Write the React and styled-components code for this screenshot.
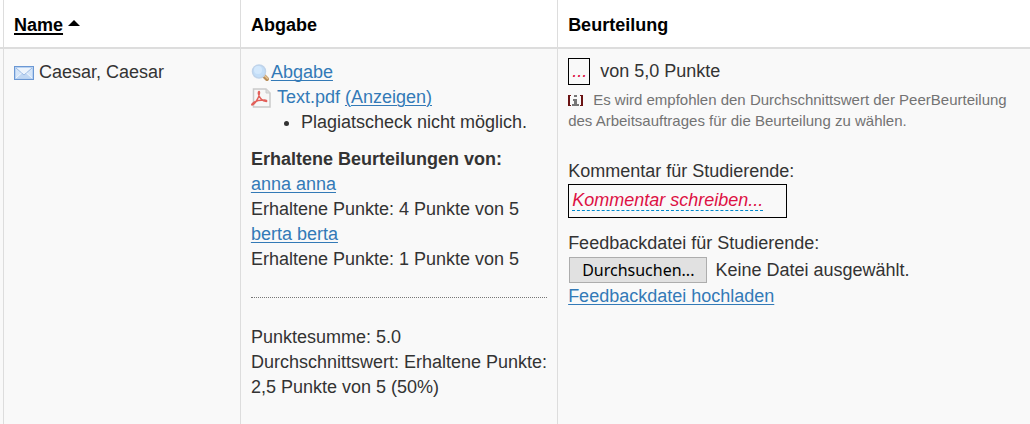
import React, { useRef } from "react";
import styled, { createGlobalStyle } from "styled-components";

const GlobalStyle = createGlobalStyle`
  * {
    box-sizing: border-box;
  }

  body {
    margin: 0;
    background: #fff;
    color: #333;
    font-family: "Liberation Sans", Arial, sans-serif;
    font-size: 18px;
    line-height: 25px;
  }
`;

const Table = styled.table`
  width: 100%;
  height: 100vh;
  table-layout: fixed;
  border-collapse: separate;
  border-spacing: 0;
`;

const Col = styled.col`
  width: ${(props) => props.$width};
`;

const HeadCell = styled.th`
  height: 49px;
  padding: 4px 10px 0;
  border-left: 1px solid #ddd;
  border-bottom: 2px solid #ddd;
  color: #000;
  text-align: left;
  vertical-align: middle;
`;

const Cell = styled.td`
  padding: 11px 10px 24px;
  border-left: 1px solid #ddd;
  background: #f9f9f9;
  vertical-align: top;
`;

const EdgeHead = styled.td`
  padding: 0;
  border-bottom: 2px solid #ddd;
`;

const EdgeCell = styled.td`
  padding: 0;
  background: #f9f9f9;
`;

const Link = styled.a`
  color: #337ab7;
  text-decoration: ${(props) => (props.$plain ? "none" : "underline")};
  text-decoration-thickness: 1px;
  text-underline-offset: 2px;
  text-decoration-skip-ink: ${(props) => (props.$skip ? "auto" : "none")};
`;

const SortLink = styled.a`
  color: #000;
  text-decoration: underline;
  text-decoration-thickness: 2px;
  text-underline-offset: 2px;
`;

const SortArrow = styled.svg`
  width: 12px;
  height: 6px;
  margin-left: 5px;
  vertical-align: 5px;
`;

const Line = styled.div`
  display: flex;
  align-items: center;
  gap: ${(props) => props.$gap || "0"};
`;

const Icon = styled.svg`
  flex: none;
`;

const Checks = styled.ul`
  margin: 0 0 12px;
  padding-left: 50px;
`;

const Review = styled.div``;

const Divider = styled.hr`
  margin: 25px 0 27px;
  border: 0;
  border-top: 1px dotted #777;
`;

const Points = styled.div`
  display: flex;
  align-items: center;
  gap: 10px;
  height: 27px;
  margin-top: -2px;
`;

const EditBox = styled.div`
  display: ${(props) => (props.$small ? "inline-flex" : "flex")};
  width: ${(props) => (props.$small ? "22px" : "219px")};
  height: ${(props) => (props.$small ? "27px" : "34px")};
  align-items: center;
  padding: 0 3px 2px;
  border: 1px solid #000;
`;

const EditButton = styled.button`
  padding: 0;
  border: 0;
  border-bottom: ${(props) => (props.$dashed ? "1px dashed #08c" : "0")};
  background: none;
  color: #dd1144;
  font: italic 18px/20px "Liberation Sans", Arial, sans-serif;
  cursor: pointer;
`;

const Hint = styled.p`
  margin: 4px 0 28px;
  color: #737373;
  font-size: 15px;
  line-height: 21px;
`;

const HintIcon = styled.svg`
  margin-right: 10px;
  vertical-align: -2px;
`;

const Label = styled.label`
  display: block;
`;

const Field = styled.div`
  margin-bottom: 13px;
`;

const FileRow = styled.div`
  display: flex;
  align-items: center;
  gap: 8px;
  margin: 1px 0;
  padding-left: 1px;
`;

const FileInput = styled.input`
  display: none;
`;

const FileButton = styled.button`
  height: 26px;
  padding: 0 12px;
  border: 1px solid #adadad;
  background: #e1e1e1;
  color: #000;
  font: 16px/22px "Noto Sans", "Open Sans", sans-serif;
`;

const MailIcon = () => (
  <Icon width="20" height="14" viewBox="0 0 20 14" aria-hidden="true">
    <rect x="0.5" y="0.5" width="19" height="13" fill="#d5e5f8" stroke="#6b98d4" />
    <rect x="1.5" y="1.5" width="17" height="11" fill="none" stroke="#b9d2f1" />
    <path d="M2 12 L8 7 H12 L18 12 Z" fill="#c0d7f3" />
    <path d="M2 2 H18 L10 9 Z" fill="#edf4fc" />
    <path d="M2 2 L10 9 L18 2" fill="none" stroke="#9dbbe4" />
    <path d="M2 12 L7.5 7 M18 12 L12.5 7" fill="none" stroke="#f0f6fd" />
  </Icon>
);

const SearchIcon = () => (
  <Icon width="20" height="18" viewBox="0 0 20 18" aria-hidden="true">
    <path d="M12.5 11.5 L16 15" stroke="#b98d58" strokeWidth="4" strokeLinecap="round" />
    <path d="M12.5 10.5 L16.5 14.5" stroke="#e6c594" strokeWidth="1.5" strokeLinecap="round" />
    <circle cx="8" cy="7.5" r="6.5" fill="#c3def8" stroke="#bfd3ea" strokeWidth="1.5" />
    <circle cx="7" cy="6" r="4" fill="#d3e8fc" />
  </Icon>
);

const PdfIcon = () => (
  <Icon width="20" height="20" viewBox="0 0 20 20" aria-hidden="true">
    <path d="M2.5 1 H15 L19 5 V19 H2.5 Z" fill="#f7f7f7" stroke="#cacaca" strokeWidth="1.5" />
    <path d="M15 1 V5 H19" fill="#ddd" stroke="#cacaca" />
    <path
      d="M1 17 C4 16 8 10 8.5 5 C8.500 2.500 7 3.500 7.500 6 C8.500 10 11 13 15.500 13.500 C16 12.500 15 12 13.500 12 C9 12 4 13 1.500 15.500 C0.800 16.200 0.500 17 1 17 Z"
      fill="none"
      stroke="#e2605a"
      strokeWidth="1.5"
      strokeLinejoin="round"
    />
  </Icon>
);

const InfoIcon = () => (
  <HintIcon width="15" height="12" viewBox="0 0 15 12" aria-hidden="true">
    <path d="M0 0 H3 V1 H2 V10 H3 V11 H0 Z M15 0 H12 V1 H13 V10 H12 V11 H15 Z" fill="#6b1414" />
    <path d="M6 0 H9 V2 H6 Z M5 4 H9 V9 H11 V11 H4 V9 H6 V6 H5 Z" fill="#777" />
  </HintIcon>
);

const reviews = [
  { name: "anna anna", points: "Erhaltene Punkte: 4 Punkte von 5" },
  { name: "berta berta", points: "Erhaltene Punkte: 1 Punkte von 5" },
];

const Submission = () => (
  <>
    <Line>
      <SearchIcon />
      <Link href="#abgabe">Abgabe</Link>
    </Line>
    <Line $gap="6px">
      <PdfIcon />
      <span>
        <Link $plain href="#text">Text.pdf</Link>{" "}
        <Link $skip href="#anzeigen">(Anzeigen)</Link>
      </span>
    </Line>
    <Checks>
      <li>Plagiatscheck nicht möglich.</li>
    </Checks>
    <strong>Erhaltene Beurteilungen von:</strong>
    {reviews.map((review) => (
      <Review key={review.name}>
        <Link href="#beurteilung">{review.name}</Link>
        <div>{review.points}</div>
      </Review>
    ))}
    <Divider />
    <div>Punktesumme: 5.0</div>
    <div>Durchschnittswert: Erhaltene Punkte: 2,5 Punkte von 5 (50%)</div>
  </>
);

const Grading = () => {
  const fileRef = useRef(null);

  return (
    <>
      <Points>
        <EditBox $small>
          <EditButton type="button" aria-label="Punkte">...</EditButton>
        </EditBox>
        <span>von 5,0 Punkte</span>
      </Points>
      <Hint>
        <InfoIcon />
        Es wird empfohlen den Durchschnittswert der PeerBeurteilung des
        Arbeitsauftrages für die Beurteilung zu wählen.
      </Hint>
      <Field>
        <Label htmlFor="kommentar">Kommentar für Studierende:</Label>
        <EditBox>
          <EditButton $dashed type="button" id="kommentar">
            Kommentar schreiben...
          </EditButton>
        </EditBox>
      </Field>
      <Label htmlFor="feedbackdatei">Feedbackdatei für Studierende:</Label>
      <FileRow>
        <FileInput type="file" id="feedbackdatei" ref={fileRef} />
        <FileButton type="button" onClick={() => fileRef.current.click()}>
          Durchsuchen...
        </FileButton>
        <span>Keine Datei ausgewählt.</span>
      </FileRow>
      <Link href="#hochladen">Feedbackdatei hochladen</Link>
    </>
  );
};

const App = () => {
  return (
    <>
      <GlobalStyle />
      <Table>
        <colgroup>
          <Col $width="3px" />
          <Col $width="23%" />
          <Col $width="30.8%" />
          <Col $width="auto" />
        </colgroup>
        <thead>
          <tr>
            <EdgeHead />
            <HeadCell scope="col" aria-sort="ascending">
              <SortLink href="#name">Name</SortLink>
              <SortArrow viewBox="0 0 12 6" aria-hidden="true">
                <path d="M6 0 L12 6 H0 Z" />
              </SortArrow>
            </HeadCell>
            <HeadCell scope="col">Abgabe</HeadCell>
            <HeadCell scope="col">Beurteilung</HeadCell>
          </tr>
        </thead>
        <tbody>
          <tr>
            <EdgeCell />
            <Cell>
              <Line $gap="5px">
                <MailIcon />
                <span>Caesar, Caesar</span>
              </Line>
            </Cell>
            <Cell>
              <Submission />
            </Cell>
            <Cell>
              <Grading />
            </Cell>
          </tr>
        </tbody>
      </Table>
    </>
  );
};

export default App;
